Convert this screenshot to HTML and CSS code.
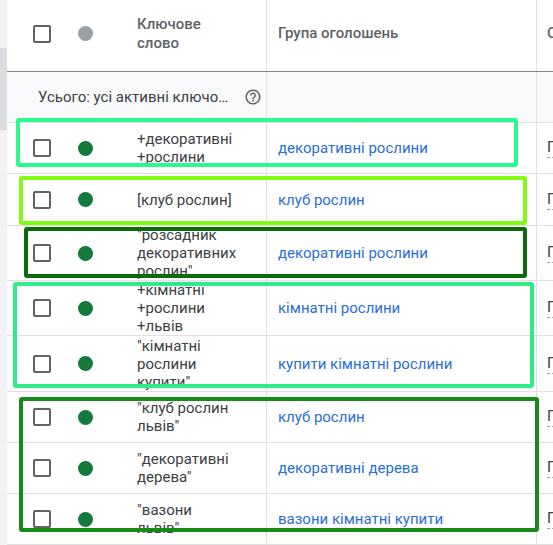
FILE: index.html
```html
<!DOCTYPE html>
<html lang="uk">
<head>
<meta charset="utf-8">
<title>Ключові слова</title>
<link rel="stylesheet" href="styles.css">
</head>
<body>
<div class="page">
  <div class="rail">
    <div class="rail-top"></div>
    <div class="rail-thumb"></div>
  </div>
  <div class="table">
    <div class="row head">
      <div class="c-check"><span class="cb"></span></div>
      <div class="c-dot"><span class="dot grey"></span></div>
      <div class="c-kw"><div class="kw">Ключове слово</div></div>
      <div class="c-group">Група оголошень</div>
      <div class="c-status">Статус</div>
    </div>
    <div class="row summary">
      <div class="c-sum">
        <span class="sum-text">Усього: усі активні ключові слова</span>
        <svg class="help" viewBox="0 0 24 24" width="18" height="18"><path d="M11 18h2v-2h-2v2zm1-16C6.48 2 2 6.48 2 12s4.48 10 10 10 10-4.48 10-10S17.52 2 12 2zm0 18c-4.41 0-8-3.590-8-8s3.59-8 8-8 8 3.59 8 8-3.59 8-8 8zm0-14c-2.21 0-4 1.79-4 4h2c0-1.1.9-2 2-2s2 .9 2 2c0 2-3 1.75-3 5h2c0-2.25 3-2.5 3-5 0-2.21-1.79-4-4-4z"/></svg>
      </div>
      <div class="c-group"></div>
      <div class="c-status"></div>
    </div>

    <div class="row">
      <div class="c-check"><span class="cb"></span></div>
      <div class="c-dot"><span class="dot"></span></div>
      <div class="c-kw"><div class="kw">+декоративні +рослини</div></div>
      <div class="c-group"><a class="link">декоративні рослини</a></div>
      <div class="c-status"><span class="status">Придатне</span></div>
    </div>
    <div class="row r52">
      <div class="c-check"><span class="cb"></span></div>
      <div class="c-dot"><span class="dot"></span></div>
      <div class="c-kw"><div class="kw">[клуб рослин]</div></div>
      <div class="c-group"><a class="link">клуб рослин</a></div>
      <div class="c-status"><span class="status">Придатне</span></div>
    </div>
    <div class="row r55">
      <div class="c-check"><span class="cb"></span></div>
      <div class="c-dot"><span class="dot"></span></div>
      <div class="c-kw"><div class="kw">"розсадник декоративних рослин"</div></div>
      <div class="c-group"><a class="link">декоративні рослини</a></div>
      <div class="c-status"><span class="status">Придатне</span></div>
    </div>
    <div class="row r55">
      <div class="c-check"><span class="cb"></span></div>
      <div class="c-dot"><span class="dot"></span></div>
      <div class="c-kw"><div class="kw">+кімнатні +рослини +львів</div></div>
      <div class="c-group"><a class="link">кімнатні рослини</a></div>
      <div class="c-status"><span class="status">Придатне</span></div>
    </div>
    <div class="row r56">
      <div class="c-check"><span class="cb"></span></div>
      <div class="c-dot"><span class="dot"></span></div>
      <div class="c-kw"><div class="kw">"кімнатні рослини купити"</div></div>
      <div class="c-group"><a class="link">купити кімнатні рослини</a></div>
      <div class="c-status"><span class="status">Придатне</span></div>
    </div>
    <div class="row">
      <div class="c-check"><span class="cb"></span></div>
      <div class="c-dot"><span class="dot"></span></div>
      <div class="c-kw"><div class="kw">"клуб рослин львів"</div></div>
      <div class="c-group"><a class="link">клуб рослин</a></div>
      <div class="c-status"><span class="status">Придатне</span></div>
    </div>
    <div class="row">
      <div class="c-check"><span class="cb"></span></div>
      <div class="c-dot"><span class="dot"></span></div>
      <div class="c-kw"><div class="kw">"декоративні дерева"</div></div>
      <div class="c-group"><a class="link">декоративні дерева</a></div>
      <div class="c-status"><span class="status">Придатне</span></div>
    </div>
    <div class="row">
      <div class="c-check"><span class="cb"></span></div>
      <div class="c-dot"><span class="dot"></span></div>
      <div class="c-kw"><div class="kw">"вазони львів"</div></div>
      <div class="c-group"><a class="link">вазони кімнатні купити</a></div>
      <div class="c-status"><span class="status">Придатне</span></div>
    </div>
  </div>

  <div class="mark m1"></div>
  <div class="mark m2"></div>
  <div class="mark m3"></div>
  <div class="mark m4"></div>
  <div class="mark m5"></div>
</div>
</body>
</html>
```

FILE: styles.css
```css
* { box-sizing: border-box; }
html, body { margin: 0; padding: 0; background: #fff; }
body {
  font-family: Roboto, "Noto Sans", "Liberation Sans", sans-serif;
  font-size: 15px;
  color: #3c4043;
  overflow: hidden;
}
.page {
  position: relative;
  display: flex;
  width: 553px;
  height: 545px;
  overflow: hidden;
}
.rail {
  width: 7px;
  flex: none;
  background: #f1f3f4;
  display: flex;
  flex-direction: column;
}
.rail-top { height: 48px; }
.rail-thumb { height: 82px; background: #dadce0; }

.table {
  flex: 1;
  min-width: 0;
  overflow: hidden;
}
.row {
  display: grid;
  grid-template-columns: 53px 50px 156px 270px 300px;
  height: 51px;
  border-bottom: 1px solid #e0e0e0;
}
.row.r52 { height: 52px; }
.row.r55 { height: 55px; }
.row.r56 { height: 56px; }
.row > div {
  display: flex;
  align-items: center;
  min-width: 0;
}
.row.head {
  height: 72px;
  border-bottom-color: #80868b;
  color: #5f6368;
  font-weight: 500;
  line-height: 19px;
}
.row.head > div { padding-bottom: 4px; }
.row.summary {
  background: #f8f9fa;
}
.c-check { padding-left: 26px; }
.c-dot { padding-left: 18px; }
.c-kw { padding-left: 27px; }
.c-sum {
  grid-column: 1 / span 3;
  padding-left: 31px;
}
.c-group {
  border-left: 1px solid #e0e0e0;
  padding-left: 11px;
}
.c-status {
  border-left: 1px solid #e0e0e0;
  padding-left: 10px;
  white-space: nowrap;
}
.cb {
  display: block;
  width: 18px;
  height: 18px;
  border: 2px solid #5f6368;
  border-radius: 2px;
}
.dot {
  display: block;
  width: 15px;
  height: 15px;
  border-radius: 50%;
  background: #137a3c;
}
.dot.grey { background: #9aa0a6; }
.kw {
  width: 100px;
  line-height: 18px;
}
.head .kw { line-height: 19px; }
.sum-text {
  display: block;
  width: 192px;
  white-space: nowrap;
  overflow: hidden;
  text-overflow: ellipsis;
}
.help {
  margin-left: 14px;
  fill: #5f6368;
  flex: none;
}
.link {
  color: #2a6fd6;
  white-space: nowrap;
}
.status {
  line-height: 19px;
  border-bottom: 1px dashed #9aa0a6;
  color: #3c4043;
}

.mark {
  position: absolute;
  border: 4px solid;
  border-radius: 3px;
  pointer-events: none;
}
.m1 { left: 16px; top: 118px; width: 502px; height: 49px; border-color: #28fa8c; }
.m2 { left: 19px; top: 176px; width: 508px; height: 49px; border-color: #80fc14; }
.m3 { left: 24px; top: 227px; width: 503px; height: 51px; border-color: #0b6a0b; }
.m4 { left: 13px; top: 282px; width: 521px; height: 106px; border-color: #30ec88; }
.m5 { left: 19px; top: 397px; width: 520px; height: 135px; border-color: #178a17; }
```
